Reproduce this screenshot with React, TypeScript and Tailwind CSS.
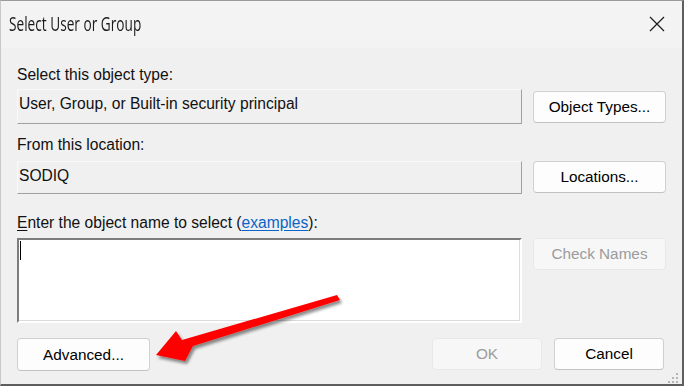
const font = { fontFamily: '"Liberation Sans", Arial, sans-serif' };

function Btn({
  label,
  disabled = false,
  className = "",
}: {
  label: string;
  disabled?: boolean;
  className?: string;
}) {
  return (
    <div
      className={`flex h-[32px] items-center justify-center rounded-[4px] border text-[15.3px] leading-[18px] ${
        disabled
          ? "border-[#e8e8e8] bg-[#f7f7f7] text-[#9b9b9b]"
          : "border-[#d0d0d0] border-b-[#c2c2c2] bg-[#fdfdfd] text-black"
      } ${className}`}
    >
      {label}
    </div>
  );
}

function ReadField({ value, className = "" }: { value: string; className?: string }) {
  return (
    <div
      className={`w-[505px] border border-t-[#f9f9f9] border-l-[#f9f9f9] border-r-[#a0a0a0] border-b-[#a0a0a0] bg-[#f0f0f0] pl-[1px] pt-[5px] text-[15.6px] leading-[18px] text-[#111] ${className}`}
    >
      {value}
    </div>
  );
}

function Arrow() {
  return (
    <svg
      className="pointer-events-none absolute left-0 top-0"
      width="685"
      height="387"
      viewBox="0 0 685 387"
    >
      <defs>
        <filter id="sh" x="-20%" y="-50%" width="140%" height="200%">
          <feDropShadow dx="2" dy="3" stdDeviation="1.6" floodColor="#000" floodOpacity="0.45" />
        </filter>
      </defs>
      <polygon
        filter="url(#sh)"
        fill="#ff0000"
        points="156,355 176,331 182,340 337,295 340,300 193,346 185,361"
      />
    </svg>
  );
}

export default function App() {
  return (
    <div className="relative h-[387px] w-[685px] overflow-hidden bg-white" style={font}>
      <div className="flex h-[386px] w-[684px] flex-col border-t border-l border-t-[#9a9a9a] border-l-[#c8c8c8] border-r-2 border-b-2 border-r-[#5e5e5e] border-b-[#5e5e5e] bg-[#f0f0f0]">
        {/* title bar */}
        <div className="flex h-[47px] shrink-0 items-center justify-between bg-[#f3f3f3] pl-[8px] pr-[17px]">
          <span
            className="inline-block origin-left scale-x-[0.7] pb-[1px] text-[19.5px] text-[#1a1a1a]"
            style={{ fontFamily: '"Open Sans", "Liberation Sans", sans-serif' }}
          >
            Select User or Group
          </span>
          <svg width="16" height="16" viewBox="0 0 16 16" className="mb-[1px]">
            <path d="M1 1 L15 15 M15 1 L1 15" stroke="#1a1a1a" strokeWidth="1.2" fill="none" />
          </svg>
        </div>

        <div className="flex flex-col pl-[16px]">
          <div className="mt-[18px] text-[15.6px] leading-[18px] text-[#111]">Select this object type:</div>
          <div className="mt-[5px] flex items-start gap-[11px]">
            <ReadField value="User, Group, or Built-in security principal" className="h-[35px]" />
            <Btn label="Object Types..." className="mt-[2px] w-[133px]" />
          </div>

          <div className="mt-[12px] text-[15.6px] leading-[18px] text-[#111]">From this location:</div>
          <div className="mt-[7px] flex items-start gap-[11px]">
            <ReadField value="SODIQ" className="h-[33px]" />
            <Btn label="Locations..." className="w-[133px]" />
          </div>

          <div className="mt-[20px] text-[15.6px] leading-[18px] text-[#111]">
            <span className="underline underline-offset-2">E</span>nter the object name to select (
            <span className="text-[#0a64c8] underline underline-offset-2">examples</span>):
          </div>
          <div className="mt-[6px] flex items-start gap-[11px]">
            <div className="h-[85px] w-[505px] border-2 border-t-[#7d7d7d] border-l-[#7d7d7d] border-r-[#fff] border-b-[#fff] bg-white">
              <div className="h-full w-full border-r border-b border-r-[#dcdcdc] border-b-[#dcdcdc] pl-[1px] pt-[1px]">
                <div className="h-[19px] w-[1px] bg-black" />
              </div>
            </div>
            <Btn label="Check Names" disabled className="w-[133px]" />
          </div>

          <div className="mt-[15px] flex items-start">
            <Btn label="Advanced..." className="h-[33px] w-[133px]" />
            <Btn label="OK" disabled className="ml-auto h-[32px] w-[110px]" />
            <Btn label="Cancel" className="ml-[12px] mr-[18px] h-[32px] w-[110px]" />
          </div>
        </div>
      </div>

      {/* resize grip */}
      <div className="absolute left-[676px] top-[373px] h-[2px] w-[2px] bg-[#b5b5b5]" />
      <div className="absolute left-[672px] top-[377px] h-[2px] w-[2px] bg-[#b5b5b5]" />
      <div className="absolute left-[676px] top-[377px] h-[2px] w-[2px] bg-[#b5b5b5]" />
      <div className="absolute left-[668px] top-[381px] h-[2px] w-[2px] bg-[#b5b5b5]" />
      <div className="absolute left-[672px] top-[381px] h-[2px] w-[2px] bg-[#b5b5b5]" />
      <div className="absolute left-[676px] top-[381px] h-[2px] w-[2px] bg-[#b5b5b5]" />

      <Arrow />
    </div>
  );
}
